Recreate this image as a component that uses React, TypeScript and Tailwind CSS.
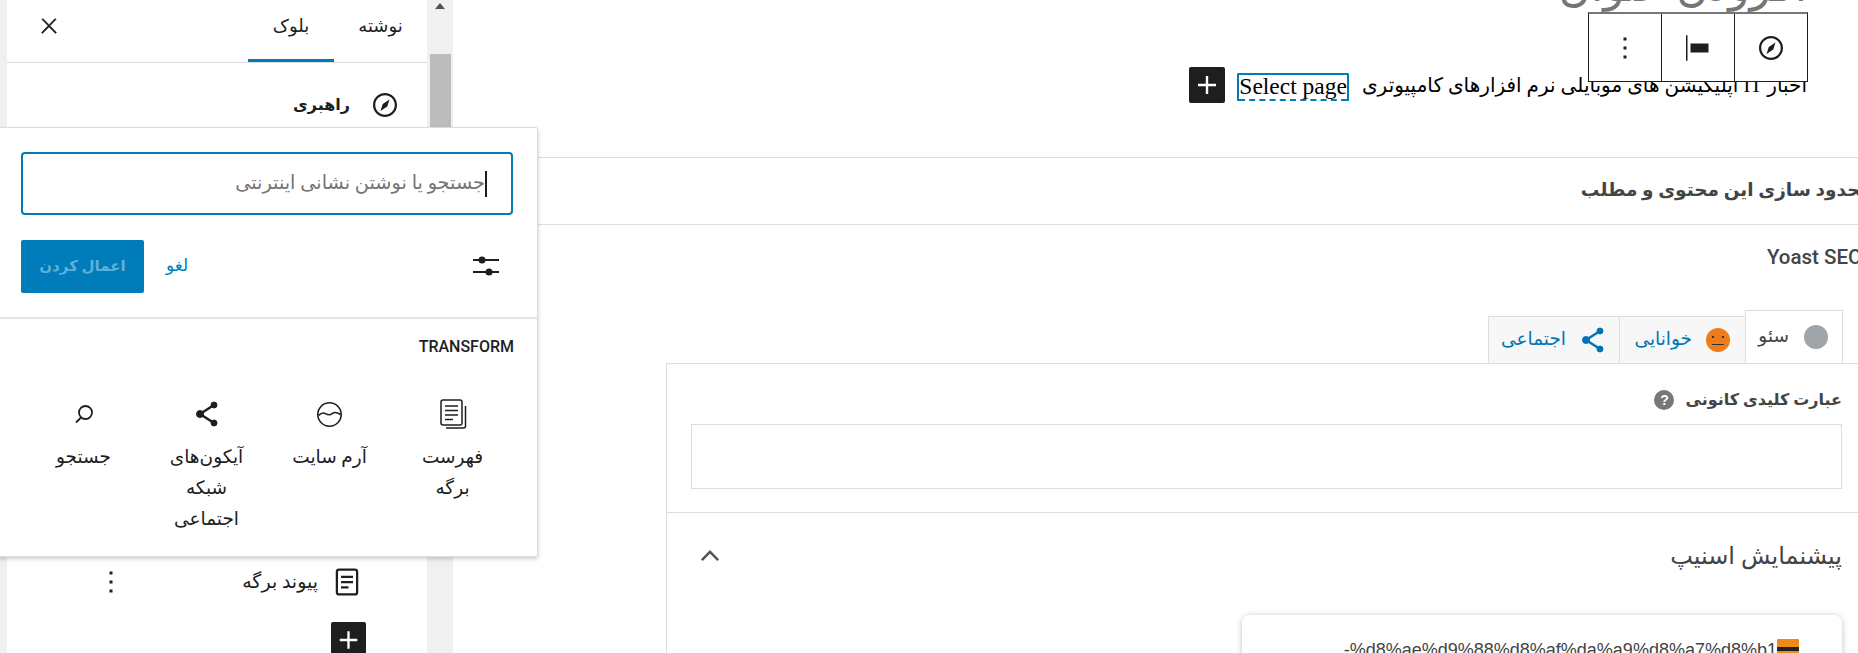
import { ReactNode } from "react";

const NavIcon = () => (
    <svg viewBox="0 0 24 24" className="w-9 h-9" fill="#1e1e1e">
        <path d="M12 4c-4.4 0-8 3.6-8 8s3.6 8 8 8 8-3.6 8-8-3.6-8-8-8zm0 14.5c-3.6 0-6.5-2.9-6.5-6.5S8.4 5.500 12 5.500s6.500 2.900 6.500 6.500-2.900 6.500-6.500 6.500zM9 16l4.500-3L15 8.400l-4.500 3L9 16z" />
    </svg>
);

const Dots = () => (
    <svg viewBox="0 0 24 24" className="w-9 h-9" fill="#1e1e1e">
        <path d="M13 19h-2v-2h2v2zm0-6h-2v-2h2v2zm0-6h-2V5h2v2z" />
    </svg>
);

const Plus = () => (
    <svg viewBox="0 0 24 24" className="w-9 h-9" fill="#fff">
        <path d="M18 11.200h-5.200V6h-1.600v5.200H6v1.600h5.200V18h1.600v-5.200H18z" />
    </svg>
);

const PageIcon = () => (
    <svg viewBox="0 0 24 24" className="w-9 h-9" fill="none" stroke="#1e1e1e" strokeWidth="1.5">
        <rect x="5.250" y="3.750" width="13.500" height="16.500" rx="1.500" />
        <path d="M8 8.500h8M8 12h8M8 15.500h5" />
    </svg>
);

const PagesIcon = () => (
    <svg viewBox="0 0 28 32" className="w-7 h-8" fill="none" stroke="#1e1e1e" strokeWidth="1.5">
        <rect x="2" y="2" width="21" height="25" rx="2" />
        <path d="M6 8h13M6 12.500h13M6 17h13M6 21.500h8" />
        <path d="M26.500 8v20a2 2 0 0 1-2 2H7" />
    </svg>
);

const SiteLogoIcon = () => (
    <svg viewBox="0 0 30 30" className="w-[27px] h-[27px]" fill="none" stroke="#1e1e1e" strokeWidth="1.8">
        <circle cx="15" cy="15" r="13" />
        <path d="M3 16c3-3 5-3.500 7.500-2s5 2 7.500 0 5-2 9 1" />
    </svg>
);

const ShareIcon = ({ color = "#1e1e1e" }: { color?: string }) => (
    <svg viewBox="0 0 24 28" className="w-6 h-7" fill={color} stroke={color}>
        <circle cx="19" cy="5" r="3" />
        <circle cx="5" cy="14" r="3.500" />
        <circle cx="19" cy="23" r="3" />
        <path d="M19 5L5 14l14 9" fill="none" strokeWidth="2.500" />
    </svg>
);

const SearchIcon = () => (
    <svg viewBox="0 0 24 24" className="w-6 h-6" fill="none" stroke="#1e1e1e" strokeWidth="1.800">
        <circle cx="13.500" cy="10.500" r="6.500" />
        <path d="M9 15.500l-5 5" />
    </svg>
);

const SettingsIcon = () => (
    <svg viewBox="0 0 26 22" className="w-[26px] h-[22px]" fill="#1e1e1e">
        <rect x="0" y="4" width="26" height="2" />
        <rect x="0" y="16" width="26" height="2" />
        <circle cx="9" cy="5" r="3.500" />
        <circle cx="16" cy="17" r="3.500" />
    </svg>
);

type TransformItem = { icon: ReactNode; lines: string[] };

const items: TransformItem[] = [
    { icon: <PagesIcon />, lines: ["فهرست", "برگه"] },
    { icon: <SiteLogoIcon />, lines: ["آرم سایت"] },
    { icon: <ShareIcon />, lines: ["آیکون‌های", "شبکه", "اجتماعی"] },
    { icon: <SearchIcon />, lines: ["جستجو"] },
];

function LinkPopover() {
    return (
        <div dir="rtl" className="absolute left-[-10px] top-[127px] w-[548px] h-[430px] bg-white border border-[#ddd] rounded-[2px] shadow-[0_2px_4px_rgba(0,0,0,0.2)] z-20">
            <div className="pt-[24px] pr-[24px] pl-[30px]">
                <div className="relative h-[63px] border-2 border-[#007cba] rounded-[4px] flex items-center pr-[24px] text-[19.3px] text-[#757575]">
                    <span className="w-[2px] h-[26px] bg-[#1e1e1e]" />
                    <span>جستجو یا نوشتن نشانی اینترنتی</span>
                </div>
            </div>
            <div className="flex items-center justify-between h-[54px] mt-[24px] pr-[38px] pl-[30px]">
                <SettingsIcon />
                <div className="flex items-center gap-[22px]">
                    <span className="text-[#007cba] text-[17px]">لغو</span>
                    <button className="w-[123px] h-[53px] bg-[#007cba] rounded-[2px] text-[#5fb0d8] text-[15px] font-bold">اعمال کردن</button>
                </div>
            </div>
            <div className="mt-[24px] border-t-2 border-[#e5e5e5] pt-[17px] pr-[23px]">
                <p dir="ltr" className="text-right text-[16px] leading-[22px] font-medium text-[#1e1e1e] font-['Roboto',sans-serif]">TRANSFORM</p>
                <div className="grid grid-cols-4 w-[492px] mt-[40px]">
                    {items.map((item) => (
                        <div key={item.lines[0]} className="flex flex-col items-center text-center text-[18.5px] leading-[31px] text-[#1e1e1e]">
                            <div className="h-8 flex items-center justify-center mb-[12px]">{item.icon}</div>
                            {item.lines.map((line) => (
                                <span key={line}>{line}</span>
                            ))}
                        </div>
                    ))}
                </div>
            </div>
        </div>
    );
}

function Sidebar() {
    return (
        <aside dir="rtl" className="w-[420px] h-full bg-white shrink-0">
            <div className="flex items-stretch h-[63px] border-b border-[#ddd]">
                <div className="w-[93px] pt-[12px] text-center text-[18px] text-[#1e1e1e]">نوشته</div>
                <div className="w-[86px] pt-[12px] text-center text-[18px] text-[#1e1e1e] border-b-[3px] border-[#007cba]">بلوک</div>
                <div className="mr-auto ml-[30px] pt-[14px]">
                    <svg viewBox="0 0 24 24" className="w-6 h-6" fill="#1e1e1e" stroke="#1e1e1e" strokeWidth="0.500">
                        <path d="M13 11.800l6.100-6.300-1-1-6.100 6.200-6.100-6.200-1 1 6.100 6.300-6.500 6.700 1 1 6.500-6.600 6.500 6.600 1-1z" />
                    </svg>
                </div>
            </div>
            <div className="flex items-center gap-[17px] pr-[24px] mt-[24px] h-9">
                <NavIcon />
                <span className="text-[16px] font-bold text-[#1e1e1e]">راهبری</span>
            </div>
            <div className="flex items-center mt-[441px] pr-[62px] h-9">
                <PageIcon />
                <span className="mr-[11px] text-[19px] text-[#1e1e1e]">پیوند برگه</span>
                <div className="mr-auto ml-[86px] h-9"><Dots /></div>
            </div>
            <div className="mt-[22px] pr-[61px]">
                <button className="w-[35px] h-[36px] bg-[#1e1e1e] rounded-[2px] flex items-center justify-center"><Plus /></button>
            </div>
        </aside>
    );
}

function Scrollbar() {
    return (
        <div className="w-[26px] h-full bg-[#f0f0f0] shrink-0 flex flex-col items-center">
            <div className="h-[54px] pt-[3px]">
                <div className="w-0 h-0 border-x-[5px] border-x-transparent border-b-[6px] border-b-[#505050]" />
            </div>
            <div className="w-[21px] h-[300px] bg-[#bcbcbc]" />
        </div>
    );
}

function BlockToolbar() {
    return (
        <div className="absolute top-[12px] left-[1135px] w-[220px] h-[70px] flex bg-white border border-[#1e1e1e] border-t-2 border-t-[#777] z-10">
            <div className="w-[73px] flex items-center justify-center border-r border-[#1e1e1e]"><Dots /></div>
            <div className="w-[73px] flex items-center justify-center border-r border-[#1e1e1e]">
                <svg viewBox="0 0 24 24" className="w-9 h-9" fill="#1e1e1e">
                    <path d="M4 3.500h1v17H4zM7 9h12v6H7z" />
                </svg>
            </div>
            <div className="flex-1 flex items-center justify-center"><NavIcon /></div>
        </div>
    );
}

function Main() {
    return (
        <main className="relative flex-1 h-full bg-white overflow-hidden">
            <BlockToolbar />
            <div dir="rtl" className="h-[20px] overflow-hidden pr-[51px] relative">
                <div className="-mt-[45px] text-[44px] leading-[62px] text-[#757575] whitespace-nowrap">افزودن عنوان</div>
            </div>
            <div dir="rtl" className="flex items-center h-[36px] mt-[47px] pr-[51px] font-['Liberation_Serif','DejaVu_Sans',serif] text-[20px] text-black">
                <span>اخبار IT اپلیکیشن های موبایلی نرم افزارهای کامپیوتری</span>
                <span className="mr-[13px] mt-[4px] h-[28px] border-2 border-b-0 border-[#007cba] rounded-t-[2px] text-[23.5px] leading-[22px]">
                    <span className="block h-[26px] border-b-2 border-dashed border-[#007cba]">Select page</span>
                </span>
                <button className="mr-[12px] w-[36px] h-[36px] bg-[#1e1e1e] rounded-[2px] flex items-center justify-center"><Plus /></button>
            </div>
            <div className="mt-[54px] border-t border-[#ddd]" />
            <div dir="rtl" className="h-[67px] flex items-center -mr-[14px] text-[18.5px] font-bold text-[#444] whitespace-nowrap border-b border-[#ddd]">
                محدود سازی این محتوی و مطلب
            </div>
            <div dir="ltr" className="pl-[1314px] mt-[20px] h-[24px] text-[20.5px] font-medium text-[#444] font-['Roboto',sans-serif] leading-[24px] whitespace-nowrap">Yoast SEO</div>
            <div dir="rtl" className="flex items-end h-[53px] mt-[41px] pr-[15px] text-[18.5px]">
                <div className="w-[98px] h-[53px] bg-white border border-[#ddd] border-b-0 flex items-center gap-[15px] pr-[14px] text-[#444] z-10">
                    <span className="w-6 h-6 rounded-full bg-[#a0a5aa]" />
                    <span>سئو</span>
                </div>
                <div className="w-[126px] h-[47px] bg-[#f7f7f7] border border-r-0 border-[#ddd] border-b-0 flex items-center gap-[14px] pr-[15px] text-[#0075b3]">
                    <span className="relative w-6 h-6 rounded-full bg-[#ee7c1b] shrink-0">
                        <span className="absolute left-[6px] top-[8px] w-[2px] h-[2px] bg-[#333]" />
                        <span className="absolute right-[6px] top-[8px] w-[2px] h-[2px] bg-[#333]" />
                        <span className="absolute left-[6px] right-[6px] top-[16px] h-px bg-[#333]" />
                    </span>
                    <span>خوانایی</span>
                </div>
                <div className="w-[131px] h-[47px] bg-[#f7f7f7] border border-r-0 border-[#ddd] border-b-0 flex items-center gap-[15px] pr-[14px] text-[#0075b3]">
                    <ShareIcon color="#0075b3" />
                    <span>اجتماعی</span>
                </div>
            </div>
            <section dir="rtl" className="ml-[213px] border-l border-t border-[#ddd] -mr-[10px]">
                <div className="pr-[26px] pl-[24px] pt-[24px] h-[149px] border-b border-[#ddd]">
                    <div className="flex items-center gap-[11px] h-[24px] text-[16px] font-bold text-[#444]">
                        <span>عبارت کلیدی کانونی</span>
                        <span className="w-[20px] h-[20px] rounded-full bg-[#777] text-white text-[14px] leading-[20px] text-center font-['Liberation_Sans',sans-serif]">?</span>
                    </div>
                    <div className="h-[65px] mt-[12px] border border-[#ddd]" />
                </div>
                <div className="flex items-center justify-between h-[86px] pr-[26px] pl-[29px]">
                    <span className="text-[24px] text-[#444]">پیشنمایش اسنیپ</span>
                    <svg viewBox="0 0 24 24" className="w-7 h-7" fill="none" stroke="#555" strokeWidth="2.200">
                        <path d="M5 15.500l7-7 7 7" />
                    </svg>
                </div>
                <div className="mr-[26px] ml-[575px] h-[90px] mt-[16px] bg-white rounded-[8px] shadow-[0_1px_6px_rgba(32,33,36,0.28)] pt-[24px] pr-[43px]">
                    <div className="flex items-start text-[18px] leading-[22px] text-[#444] font-['Liberation_Sans',sans-serif]">
                        <span className="w-[22px] h-[16px] bg-[linear-gradient(#f08a1d_50%,#222_50%,#222_75%,#f08a1d_75%)] rounded-[1px] shrink-0" />
                        <span dir="ltr" className="whitespace-nowrap">-%d8%ae%d9%88%d8%af%da%a9%d8%a7%d8%b1</span>
                    </div>
                </div>
            </section>
        </main>
    );
}

export default function App() {
    return (
        <div dir="ltr" className="relative flex w-full h-[653px] overflow-hidden bg-[#f0f0f0] font-['Roboto','DejaVu_Sans',sans-serif]">
            <div className="w-[7px] shrink-0" />
            <Sidebar />
            <Scrollbar />
            <Main />
            <LinkPopover />
        </div>
    );
}
